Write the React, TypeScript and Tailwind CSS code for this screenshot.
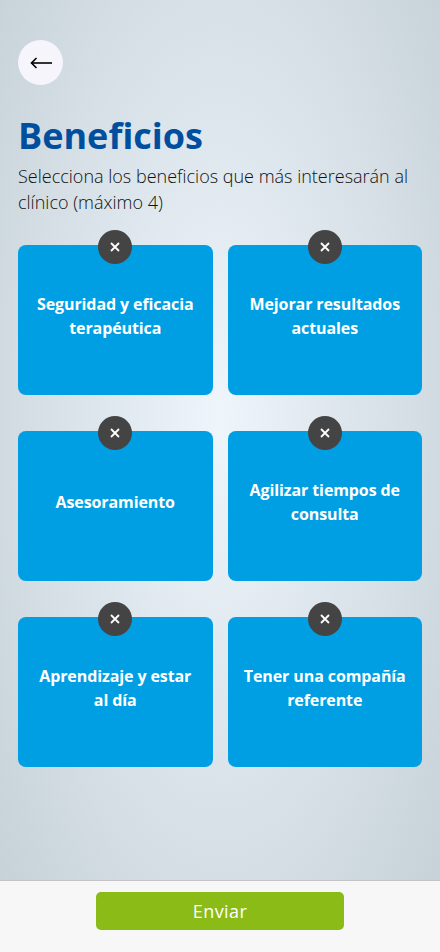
const beneficios = [
  'Seguridad y eficacia terapéutica',
  'Mejorar resultados actuales',
  'Asesoramiento',
  'Agilizar tiempos de consulta',
  'Aprendizaje y estar al día',
  'Tener una compañía referente',
];

export default function App() {
  return (
    <div className="h-[952px] w-[440px] overflow-hidden flex flex-col font-['Open_Sans',sans-serif] bg-[radial-gradient(ellipse_farthest-corner_at_50%_44%,#eef6fc_0%,#dde6ec_40%,#c4d0d6_100%)]">
      <main className="flex-1 px-[18px] pt-10">
        <button className="w-[45px] h-[45px] rounded-full bg-[#f6f5fb] flex items-center justify-center text-black">
          <svg width="22" height="12" viewBox="0 0 22 12" fill="none" stroke="currentColor" strokeWidth="1.6">
            <path d="M22 6H1.5" />
            <path d="M6.5 1 1.5 6l5 5" />
          </svg>
        </button>

        <h1 className="mt-[26px] text-[36px] leading-[50px] font-bold text-[#004f9f]">Beneficios</h1>
        <p className="mt-[2px] text-[18px] leading-[26px] font-light text-[#111111]">
          Selecciona los beneficios que más interesarán al clínico (máximo 4)
        </p>

        <div className="mt-[30px] grid grid-cols-2 gap-x-[15px] gap-y-9">
          {beneficios.map((b) => (
            <div
              key={b}
              className="relative h-[150px] rounded-lg bg-[#009fe3] flex items-center justify-center px-[14px] pb-2"
            >
              <span className="absolute left-1/2 -top-[15px] -translate-x-1/2 w-[34px] h-[34px] rounded-full bg-[#444444] flex items-center justify-center text-white">
                <svg width="10" height="10" viewBox="0 0 10 10" fill="none" stroke="currentColor" strokeWidth="1.8">
                  <path d="M1 1l8 8M9 1l-8 8" />
                </svg>
              </span>
              <p className="text-center text-white text-[16px] leading-6 font-bold tracking-[-0.1px]">{b}</p>
            </div>
          ))}
        </div>
      </main>

      <footer className="h-[72px] bg-[#f7f7f7] border-t border-[#c4c4c8] flex justify-center pt-[11px]">
        <button className="w-[248px] h-[38px] rounded-[5px] bg-[#8bbb16] text-white text-[18px] tracking-[0.4px]">Enviar</button>
      </footer>
    </div>
  );
}
